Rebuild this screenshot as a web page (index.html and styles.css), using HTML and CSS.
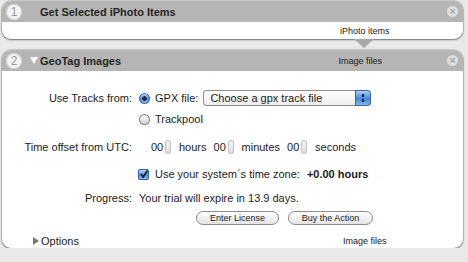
FILE: index.html
```html
<!DOCTYPE html>
<html lang="en">
<head>
    <meta charset="UTF-8">
    <title>GeoTag Images</title>
    <link rel="stylesheet" href="styles.css">
</head>
<body>
<div class="workflow">
    <div class="action first">
        <div class="action-header">
            <span class="step">1</span>
            <span class="title">Get Selected iPhoto Items</span>
            <span class="close">&times;</span>
        </div>
        <div class="action-footer">
            <span class="io">iPhoto items</span>
        </div>
        <div class="tail"></div>
    </div>

    <div class="action">
        <div class="action-header">
            <span class="step">2</span>
            <span class="disclosure open"></span>
            <span class="title">GeoTag Images</span>
            <span class="io">Image files</span>
            <span class="close">&times;</span>
        </div>
        <div class="action-body">
            <div class="row r1">
                <span class="label">Use Tracks from:</span>
                <span class="radio on"></span>
                <span class="opt">GPX file:</span>
                <span class="select">
                    <span class="select-text">Choose a gpx track file</span>
                    <span class="select-arrows"></span>
                </span>
            </div>
            <div class="row r2">
                <span class="label"></span>
                <span class="radio"></span>
                <span class="opt">Trackpool</span>
            </div>
            <div class="row r3">
                <span class="label">Time offset from UTC:</span>
                <span class="time">
                    <span class="num">00</span><span class="stepper"></span><span class="unit">hours</span>
                    <span class="num">00</span><span class="stepper"></span><span class="unit">minutes</span>
                    <span class="num">00</span><span class="stepper"></span><span class="unit">seconds</span>
                </span>
            </div>
            <div class="row r4">
                <span class="label"></span>
                <span class="check">
                    <svg width="10" height="10" viewBox="0 0 10 10"><path d="M2 5 L4.2 8 L8.5 1.5" fill="none" stroke="#1a1a1a" stroke-width="1.8"/></svg>
                </span>
                <span class="opt">Use your system´s time zone:</span>
                <b class="offset">+0.00 hours</b>
            </div>
            <div class="row r5">
                <span class="label">Progress:</span>
                <span>Your trial will expire in 13.9 days.</span>
            </div>
            <div class="row r6">
                <span class="label"></span>
                <button class="pill license">Enter License</button>
                <button class="pill buy">Buy the Action</button>
            </div>
            <div class="footer">
                <span class="disclosure"></span>
                <span class="options">Options</span>
                <span class="io">Image files</span>
            </div>
        </div>
    </div>
</div>
</body>
</html>
```

FILE: styles.css
```css
body {
    margin: 0;
    background: #e9e9e9;
    font-family: "Liberation Sans", Arial, sans-serif;
    font-size: 11px;
    color: #1c1c1c;
}

.workflow {
    display: flex;
    flex-direction: column;
    gap: 11px;
    padding: 1px 5px 0 2px;
}

.action {
    position: relative;
    background: #fff;
    border-radius: 9px;
    box-shadow: 0 1px 2px rgba(0, 0, 0, 0.45), 0 0 0 1px rgba(0, 0, 0, 0.12);
}

.action-header {
    height: 21px;
    display: flex;
    align-items: center;
    background: #b5b5b5;
    border-radius: 9px 9px 0 0;
    padding-left: 4px;
    padding-right: 5px;
}

.step {
    width: 16px;
    height: 16px;
    border-radius: 50%;
    background: #f4f4f4;
    color: #999;
    font-size: 12px;
    display: flex;
    align-items: center;
    justify-content: center;
    box-shadow: inset 0 0 0 1px #d0d0d0;
}

.first .title {
    margin-left: 18px;
}

.title {
    font-weight: bold;
    color: #262626;
}

.action-header .io {
    margin-left: auto;
    margin-right: 65px;
}

.io {
    font-size: 9px;
    color: #222;
}

.close {
    width: 11px;
    height: 11px;
    border-radius: 50%;
    background: #dedede;
    color: #a8a8a8;
    font-size: 11px;
    font-weight: bold;
    line-height: 11px;
    text-align: center;
}

.first .close {
    margin-left: auto;
}

.action-footer {
    height: 17px;
    display: flex;
    align-items: center;
    padding-left: 338px;
}

.tail {
    position: absolute;
    left: 352px;
    bottom: -9px;
    width: 0;
    height: 0;
    border-left: 10px solid transparent;
    border-right: 10px solid transparent;
    border-top: 9px solid #a9a9a9;
}

.disclosure {
    width: 0;
    height: 0;
    border-top: 4px solid transparent;
    border-bottom: 4px solid transparent;
    border-left: 6px solid #777;
}

.disclosure.open {
    margin-left: 8px;
    margin-right: 2px;
    border-left: 4px solid transparent;
    border-right: 4px solid transparent;
    border-top: 7px solid #fff;
    border-bottom: 0;
}

.action-body {
    padding-top: 18px;
    display: flex;
    flex-direction: column;
}

.row {
    display: flex;
    align-items: center;
    height: 16px;
}

.label {
    width: 130px;
    text-align: right;
    margin-right: 7px;
    flex: none;
}

.r1 { height: 18px; }
.r2 { margin-top: 4px; }
.r3 { margin-top: 12px; }
.r4 { margin-top: 11px; }
.r5 { margin-top: 8px; }
.r6 { margin-top: 4px; }

.radio {
    width: 11px;
    height: 11px;
    border-radius: 50%;
    background: linear-gradient(#fafafa, #d4d4d4);
    box-shadow: inset 0 0 0 1px #8a8a8a;
    margin-right: 5px;
    flex: none;
}

.radio.on {
    background: radial-gradient(circle, #1d2a44 0 2px, transparent 2.5px), linear-gradient(#cde3fb, #4d8fe0 55%, #9cc6f4);
    box-shadow: inset 0 0 0 1px #3c62a6;
}

.opt {
    margin-right: 9px;
}

.r1 .opt {
    margin-right: 5px;
}

.select {
    width: 168px;
    height: 16px;
    display: flex;
    align-items: center;
    border-radius: 4px;
    background: linear-gradient(#ffffff, #ececec);
    box-shadow: inset 0 0 0 1px #8f8f8f;
}

.select-text {
    padding-left: 7px;
}

.select-arrows {
    margin-left: auto;
    width: 16px;
    height: 16px;
    border-radius: 0 4px 4px 0;
    background: radial-gradient(circle at 50% 35%, #1c2a40 0 1.3px, transparent 1.6px), radial-gradient(circle at 50% 65%, #1c2a40 0 1.3px, transparent 1.6px), linear-gradient(#bcd8f8, #3f86dc 55%, #8fc0f2);
    box-shadow: inset 0 0 0 1px #3c62a6;
}

.time {
    display: flex;
    align-items: center;
    margin-left: 12px;
}

.num {
    width: 12px;
}

.stepper {
    width: 6px;
    height: 14px;
    margin-left: 2px;
    border-radius: 3px;
    background: linear-gradient(#f6f6f6, #dcdcdc);
    box-shadow: inset 0 0 0 1px #c4c4c4;
}

.unit {
    margin-left: 8px;
    margin-right: 7px;
}

.check {
    width: 11px;
    height: 11px;
    border-radius: 2px;
    background: linear-gradient(#cde3fb, #4d8fe0 55%, #9cc6f4);
    box-shadow: inset 0 0 0 1px #3c62a6;
    margin-left: -1px;
    margin-right: 6px;
    display: flex;
    align-items: center;
    justify-content: center;
}

.r4 .opt {
    margin-right: 7px;
}

.offset {
    font-weight: bold;
}

.pill {
    height: 14px;
    padding: 0;
    border: 1px solid #8c8c8c;
    border-radius: 7px;
    background: linear-gradient(#ffffff, #e3e3e3);
    font-family: "Liberation Sans", Arial, sans-serif;
    font-size: 9px;
    color: #222;
}

.license {
    width: 83px;
    margin-left: 57px;
}

.buy {
    width: 85px;
    margin-left: 9px;
}

.footer {
    margin-top: 8px;
    height: 14px;
    display: flex;
    align-items: center;
    padding-left: 31px;
}

.options {
    margin-left: 2px;
}

.footer .io {
    margin-left: 264px;
}
```
